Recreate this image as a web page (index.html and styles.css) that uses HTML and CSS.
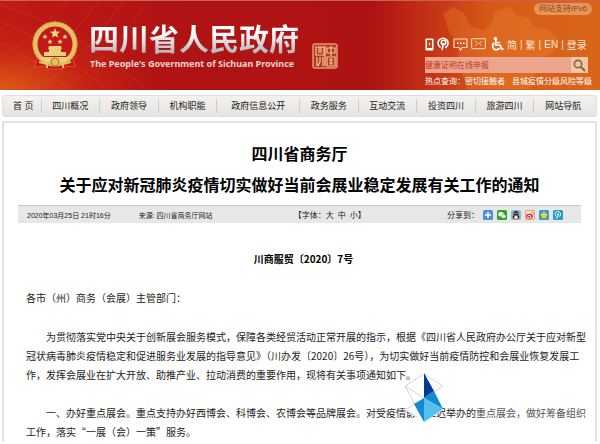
FILE: index.html
```html
<!DOCTYPE html>
<html lang="zh-CN">
<head>
  <meta charset="utf-8">
  <title>四川省人民政府</title>
  <link rel="stylesheet" href="styles.css">
</head>
<body>

  <header class="header">
    <svg class="pattern" viewBox="0 0 180 90" aria-hidden="true">
      <g fill="none" stroke="#e8602c" stroke-width="1" opacity=".25">
        <path d="M0 20 Q50 42 110 90 M0 42 Q35 58 70 90 M0 4 Q70 24 150 90 M0 66 L28 90"/>
        <path d="M0 84 Q50 68 100 0 M30 90 Q80 68 124 0 M64 90 Q110 60 146 6 M0 56 Q35 40 66 0 M0 30 L28 0"/>
      </g>
    </svg>
    <svg class="map" viewBox="0 0 110 80" aria-hidden="true">
      <path fill="#f0903a" opacity=".28" d="M0 8l10-6 10 6 6 12 12 4 8-6 4-12 14-4 6 8 12 2 4 8 16 4 8 10-6 12-10 4-2 14-10 6 2 14H24L16 58l-2-20-8-12z"/>
    </svg>

    <a class="brand" href="#">
      <svg class="emblem" viewBox="0 0 48 50" aria-hidden="true">
        <path fill="#c3141a" stroke="#e24a34" d="M7 35h34l3 11-9-1-4 3H17l-4-3-9 1z"/>
        <circle cx="24" cy="23" r="20" fill="#c4181a" stroke="#e3c062" stroke-width="5"/>
        <circle cx="24" cy="23" r="22" fill="none" stroke="#b98a2e" stroke-width="1" stroke-dasharray="2 2"/>
        <path fill="#f0d77c" d="M24 7l1.400 3.500 3.800.2-3 2.400 1 3.600-3.200-2-3.200 2 1-3.600-3-2.400 3.800-.2z"/>
        <g fill="#f0d77c">
          <path id="star" d="M14 13l.7 1.800 2 .1-1.500 1.200.5 1.900-1.700-1-1.700 1 .5-1.900-1.500-1.200 2-.1z"/>
          <use href="#star" x="20"/>
          <use href="#star" x="5" y="5"/>
          <use href="#star" x="15" y="5"/>
        </g>
        <path fill="#ead077" d="M18 25h12l1 3h-1v3h5v4H13v-4h5v-3h-1zM9 36h30l-5 5H14z"/>
        <circle cx="24" cy="41" r="4" fill="#e3c062" stroke="#a9791f"/>
        <path fill="none" stroke="#e3c062" stroke-width="2" d="M8 41l8 2M40 41l-8 2M16 42v5M32 42v5"/>
      </svg>
      <span class="brand-text">
        <span class="brand-cn">四川省人民政府</span>
        <span class="brand-en">The People's Government of Sichuan Province</span>
      </span>
      <svg class="seal" viewBox="0 0 26 26" aria-hidden="true">
        <rect x="1" y="1" width="24" height="24" rx="2" fill="#b23a22" stroke="#e49a70" stroke-width="1.500"/>
        <g fill="none" stroke="#f5c79c" stroke-width="1.200">
          <path d="M4 4h8v8H4zM7 4v6M9 4v6M15 5h8v5h-8zM19 3v10"/>
          <path d="M5 14v9M8 14v5l-2 4M11 14v9M15 14h8v9h-8zM17 17h4M17 20h4M19 15v7M13 3v20"/>
        </g>
      </svg>
    </a>

    <div class="tools">
      <a class="badge" href="#">网站支持IPv6</a>
      <div class="quick">
        <svg width="9" height="13" viewBox="0 0 9 13"><rect x=".5" y=".5" width="8" height="12" rx="1" fill="#fff"/><path fill="#d0401a" d="M2 2h5v8H2z"/><path stroke="#fff" d="M4.500 5v2"/></svg>
        <svg width="13" height="14" viewBox="0 0 13 14"><path fill="none" stroke="#fff" stroke-width="1.600" d="M3.500 10.500a5 5 0 1 1 4.500.3M5 13l1.500-7"/><circle cx="6.500" cy="5.500" r="2.200" fill="none" stroke="#fff" stroke-width="1.500"/></svg>
        <svg width="15" height="13" viewBox="0 0 15 13"><path fill="none" stroke="#fbd9bf" stroke-width="1.200" d="M1 1h13v8.500H9L7.500 12 6 9.500H1z"/><path stroke="#fff" stroke-width="1.500" stroke-dasharray="1.500 1.500" d="M4 5.300h8"/></svg>
        <svg width="15" height="12" viewBox="0 0 15 12"><rect x=".6" y=".6" width="13.800" height="10" rx="1" fill="none" stroke="#fbc9a0" stroke-width="1.200"/><path fill="none" stroke="#fbc9a0" d="M4 3l3.500 3L11 3M4 8l2-2M11 8L9 6"/></svg>
        <svg class="wheel" width="13" height="14" viewBox="0 0 13 14"><circle cx="4.500" cy="1.700" r="1.700" fill="#fff"/><path fill="none" stroke="#fff" stroke-width="1.700" d="M4.700 3v5h4.500l1.500 4.300 1.800-.6M5 5.500h4M3 6a3.800 3.800 0 1 0 5.600 5"/></svg>
        <a href="#">简</a><i>|</i><a href="#">繁</a><i>|</i><a href="#">EN</a><i>|</i><a href="#">登录</a>
      </div>
      <form class="search">
        <input type="text" aria-label="站内搜索" placeholder="健康证明在线申报">
        <button type="button" aria-label="搜索">
          <svg width="13" height="13" viewBox="0 0 13 13"><circle cx="5" cy="5" r="3.700" fill="none" stroke="#8b6248" stroke-width="1.700"/><path stroke="#8b6248" stroke-width="2.200" d="M8 8l4 4"/></svg>
        </button>
      </form>
      <p class="hot">热点查询：<a href="#">密切接触者</a><a href="#">县城疫情分级风险等级</a></p>
    </div>
  </header>

  <nav>
    <ul class="nav">
      <li class="home"><a href="#">首 页</a></li>
      <li><a href="#">四川概况</a></li>
      <li><a href="#">政府领导</a></li>
      <li><a href="#">机构职能</a></li>
      <li class="wide"><a href="#">政府信息公开</a></li>
      <li><a href="#">政务服务</a></li>
      <li><a href="#">互动交流</a></li>
      <li><a href="#">投资四川</a></li>
      <li><a href="#">旅游四川</a></li>
      <li><a href="#">网站导航</a></li>
    </ul>
  </nav>

  <main class="article">
    <h1>四川省商务厅<br>关于应对新冠肺炎疫情切实做好当前会展业稳定发展有关工作的通知</h1>

    <div class="meta">
      <span class="date">2020年03月25日 21时16分</span>
      <span class="source">来源: 四川省商务厅网站</span>
      <span class="size">【字体：<a href="#">大</a><a href="#">中</a><a href="#">小</a>】</span>
      <div class="share">
        <span>分享到：</span>
        <a href="#" aria-label="更多"><svg viewBox="0 0 10 10"><rect width="10" height="10" rx="1.500" fill="#4a90e2"/><path stroke="#fff" stroke-width="1.500" d="M5 2v6M2 5h6"/></svg></a>
        <a href="#" aria-label="微信"><svg viewBox="0 0 10 10"><rect width="10" height="10" rx="1.500" fill="#2fa52c"/><ellipse cx="4" cy="4.200" rx="2.700" ry="2.200" fill="#fff"/><ellipse cx="6.700" cy="6.300" rx="2.300" ry="1.900" fill="#fff" stroke="#2fa52c" stroke-width=".5"/></svg></a>
        <a href="#" aria-label="QQ"><svg viewBox="0 0 10 10"><rect width="10" height="10" rx="1.500" fill="#7fc1e6"/><ellipse cx="5" cy="4" rx="2.600" ry="3" fill="#222"/><ellipse cx="5" cy="7" rx="3.300" ry="2.300" fill="#222"/><ellipse cx="5" cy="7.300" rx="1.800" ry="1.600" fill="#fff"/><path stroke="#e23b2a" stroke-width="1.200" d="M2.500 5.500h5"/><path stroke="#f5b02c" d="M2 9.300h2.500M5.500 9.300H8"/><path stroke="#fff" d="M3.500 3.300h1M5.500 3.300h1"/></svg></a>
        <a href="#" aria-label="微博"><svg viewBox="0 0 10 10"><rect x=".4" y=".4" width="9.200" height="9.200" rx="1.500" fill="#fbe3d0" stroke="#e8855a" stroke-width=".8"/><ellipse cx="4.500" cy="6.200" rx="3.300" ry="2.400" fill="#d9232a"/><ellipse cx="4.300" cy="6.400" rx="1.900" ry="1.400" fill="#fff"/><circle cx="4.200" cy="6.500" r=".8" fill="#222"/><path fill="none" stroke="#f0932b" d="M6.200 2a2.300 2.300 0 0 1 2.300 2.700"/></svg></a>
        <a href="#" aria-label="QQ空间"><svg viewBox="0 0 10 10"><rect width="10" height="10" rx="1.500" fill="#2d9bd8"/><path fill="#fbd12e" d="M5 .8l1.300 2.700 2.900.4-2.100 2 .5 3L5 7.500 2.400 8.900l.5-3-2.100-2 2.900-.4z"/></svg></a>
        <a href="#" aria-label="腾讯微博"><svg viewBox="0 0 10 10"><rect width="10" height="10" rx="1.500" fill="#2a9bc4"/><path fill="none" stroke="#e5f6fc" d="M3.500 6.500a2.700 2.700 0 1 1 2.300.2M3.500 9l1.500-4.500"/><circle cx="5.200" cy="4.200" r="1" fill="#e5f6fc"/></svg></a>
      </div>
    </div>

    <div class="content">
      <p class="number">川商服贸〔2020〕7号</p>
      <p>各市（州）商务（会展）主管部门：</p>
      <p class="indent">为贯彻落实党中央关于创新展会服务模式，保障各类经贸活动正常开展的指示，根据《四川省人民政府办公厅关于应对新型冠状病毒肺炎疫情稳定和促进服务业发展的指导意见》（川办发〔2020〕26号），为切实做好当前疫情防控和会展业恢复发展工作，发挥会展业在扩大开放、助推产业、拉动消费的重要作用，现将有关事项通知如下。</p>
      <p class="indent">一、办好重点展会。重点支持办好西博会、科博会、农博会等品牌展会。对受疫情影响推迟举办的<span class="faded">重点展会，做好筹备组织</span>工作，落实“一展（会）一策”服务。</p>
    </div>

    <!-- floating crystal mark -->
    <svg class="crystal" viewBox="0 0 40 50" aria-hidden="true">
      <path fill="#fff" d="M20 0L0 13l11 18L1 37l19 12 19-12-9-18 9-6z"/>
      <path fill="none" stroke="#c9c9c9" stroke-width=".8" d="M20 1L1 13l19 12M20 1l19 12-9 6M1 13l10 18L1 37l12 7"/>
      <path fill="#003c96" d="M20 0l10 18-10 7z"/>
      <path fill="#148bd0" d="M30 18l9 18-19-11zM20 25l-10 6 10 18z"/>
      <path fill="#52c1f0" d="M20 25l19 11-19 13z"/>
    </svg>
  </main>

</body>
</html>
```
FILE: styles.css
```css
* {
  box-sizing: border-box;
}

body {
  margin: 0;
  background: #fff;
  color: #222;
  font-family: "Liberation Sans", "Noto Sans CJK SC", sans-serif;
  font-size: 10px;
}

a {
  color: inherit;
  text-decoration: none;
}

p, ul, h1 {
  margin: 0;
  padding: 0;
}

/* header */

.header {
  position: relative;
  display: flex;
  justify-content: space-between;
  height: 90px;
  padding: 0 8px 0 31px;
  border-top: 1px solid #c9605a;
  background:
    radial-gradient(ellipse 150px 70px at 0 100%, #dd5a14, rgba(205, 40, 20, 0.6) 60%, transparent),
    linear-gradient(90deg, #bf1a16 0, #b01313 30%, #ae1313 62%, #c02c14 70%, #d75a17 82%, #d9661a 100%);
}

.pattern {
  position: absolute;
  left: 0;
  top: 0;
  height: 89px;
}

.map {
  position: absolute;
  right: 42px;
  top: 4px;
  height: 84px;
}

.brand {
  position: relative;
  display: flex;
  align-items: flex-start;
}

.emblem {
  width: 48px;
  height: 50px;
  margin-top: 20px;
}

.brand-text {
  display: flex;
  flex-direction: column;
  margin: 21px 0 0 10px;
}

.brand-cn {
  font-size: 30px;
  line-height: 35px;
  font-weight: bold;
  white-space: nowrap;
  background: linear-gradient(#fff 30%, #b9b9bd 85%);
  -webkit-background-clip: text;
  background-clip: text;
  color: transparent;
}

.brand-en {
  padding-left: 1px;
  font-family: "Noto Sans", sans-serif;
  font-size: 9px;
  line-height: 14px;
  font-weight: bold;
  color: #ecd6d2;
  white-space: nowrap;
}

.seal {
  width: 26px;
  height: 26px;
  margin: 42px 0 0 13px;
}

.tools {
  position: relative;
  display: flex;
  flex-direction: column;
  width: 167px;
  color: #fbe6d6;
}

.badge {
  align-self: flex-end;
  margin-top: 2px;
  padding: 0 5px;
  border-radius: 6px;
  background: #e8935a;
  color: #8a4a22;
  font-size: 8px;
  line-height: 12px;
}

.quick {
  display: flex;
  align-items: center;
  gap: 3px;
  height: 20px;
  margin-top: 19px;
  font-size: 10px;
  white-space: nowrap;
}

.quick i {
  font-style: normal;
}

.wheel {
  margin-left: 2px;
}

.search {
  display: flex;
  width: 163px;
  height: 16px;
  margin-top: 3px;
}

.search input {
  flex: 1;
  min-width: 0;
  padding: 0;
  border: 0;
  background: #eba58c;
  font: inherit;
  font-size: 8px;
}

.search input::placeholder {
  color: #c0341c;
}

.search button {
  display: flex;
  align-items: center;
  justify-content: center;
  width: 17px;
  padding: 0;
  border: 0;
  background: #f0c8a4;
}

.hot {
  display: flex;
  margin-top: 2px;
  font-size: 8px;
  line-height: 14px;
  color: #fff;
  white-space: nowrap;
}

.hot a + a {
  margin-left: 7px;
}

/* main navigation */

.nav {
  display: flex;
  margin: 5px 3px 0 2px;
  padding: 3px 4px 3px 0;
  border: 1px solid #dedddb;
  border-radius: 3px;
  background: linear-gradient(#f3f2f0, #e6e4e0);
  list-style: none;
  font-size: 9px;
  line-height: 14px;
}

.nav li {
  flex: 1 1 auto;
  border-left: 1px solid #cfcdca;
  text-align: center;
  white-space: nowrap;
}

.nav .home {
  flex-grow: 0;
  padding: 0 7px 0 10px;
  border-left: 0;
}

.nav .wide {
  padding: 0 3px;
}

/* article */

.article {
  position: relative;
  margin: 4px 3px 0 2px;
  padding: 16px 14px 0;
  border: 2px solid #e2e2e2;
  border-bottom: 0;
}

h1 {
  color: #000;
  font-size: 16px;
  line-height: 31px;
  font-weight: bold;
  text-align: center;
}

.meta {
  display: flex;
  align-items: center;
  height: 18px;
  margin-top: 4px;
  padding: 0 18px 0 9px;
  border-top: 1px solid #c8c8c8;
  background: #e7e7e7;
  font-size: 8px;
  white-space: nowrap;
}

.date, .source {
  font-size: 7px;
}

.source {
  margin-left: 28px;
}

.size {
  margin: 0 auto;
}

.size a + a {
  margin-left: 4px;
}

.share {
  display: flex;
  align-items: center;
  gap: 4px;
}

.share svg {
  display: block;
  width: 10px;
  height: 10px;
}

.content {
  padding: 0 2px 0 8px;
  margin-right: -10px;
  font-family: "Noto Sans CJK SC", sans-serif;
  line-height: 19px;
}

.content p {
  margin-top: 20px;
}

.content .number {
  margin-top: 26px;
  padding-right: 8px;
  color: #000;
  font-weight: bold;
  text-align: center;
}

.content .indent {
  text-indent: 2em;
}

.content .indent + .indent {
  margin-top: 19px;
}

.faded {
  color: #555;
}

.crystal {
  position: absolute;
  left: 68%;
  top: 250px;
  width: 40px;
  height: 50px;
  margin-left: -2px;
}
```
